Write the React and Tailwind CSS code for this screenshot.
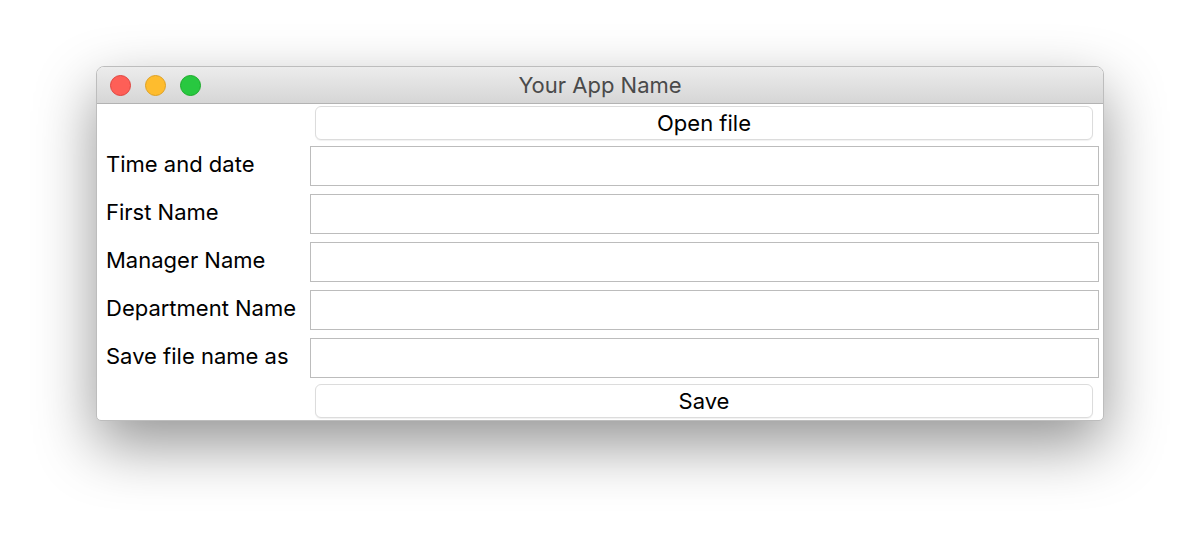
import React from "react";

const labels = ["Time and date", "First Name", "Manager Name", "Department Name", "Save file name as"];

function MacButton({ children }) {
  return (
    <div className="ml-[5px] mr-[6px] flex h-[34px] items-center justify-center rounded-[6px] border border-[#dcdcdc] bg-white text-[22px] text-black shadow-[0_1px_1px_rgba(0,0,0,0.06)]">
      {children}
    </div>
  );
}

export default function App() {
  return (
    <div
      className="relative h-[549px] w-[1200px] overflow-hidden bg-white"
      style={{ fontFamily: "Inter, 'Liberation Sans', sans-serif" }}
    >
      <div className="absolute left-[96px] top-[66px] w-[1008px] overflow-hidden rounded-t-[8px] rounded-b-[5px] border border-[#bdbdbd] bg-white shadow-[0_24px_60px_rgba(0,0,0,0.42)]">
        {/* title bar */}
        <div className="relative flex h-[37px] items-center border-b border-[#b3b3b3] bg-gradient-to-b from-[#ececec] to-[#d6d6d6]">
          <div className="ml-[13px] flex gap-[14px]">
            <div className="h-[21px] w-[21px] rounded-full border border-[#e0443e] bg-[#fe5f57]" />
            <div className="h-[21px] w-[21px] rounded-full border border-[#dea123] bg-[#febc2e]" />
            <div className="h-[21px] w-[21px] rounded-full border border-[#1aab29] bg-[#28c840]" />
          </div>
          <div className="absolute inset-0 flex items-center justify-center text-[22px] text-[#4a4a4a]">
            Your App Name
          </div>
        </div>
        {/* content */}
        <div className="flex flex-col pb-[2px] pl-[9px] pr-[4px] pt-[2px]">
          <div className="grid grid-cols-[204px_1fr]">
            <div />
            <MacButton>Open file</MacButton>
          </div>
          <div className="mt-[6px] flex flex-col gap-[8px]">
            {labels.map((l) => (
              <div key={l} className="grid grid-cols-[204px_1fr] items-center">
                <div className="pb-[3px] text-[22px] text-black">{l}</div>
                <div className="h-[40px] border border-[#bcbcbc] bg-white" />
              </div>
            ))}
          </div>
          <div className="mt-[6px] grid grid-cols-[204px_1fr]">
            <div />
            <MacButton>Save</MacButton>
          </div>
        </div>
      </div>
    </div>
  );
}
